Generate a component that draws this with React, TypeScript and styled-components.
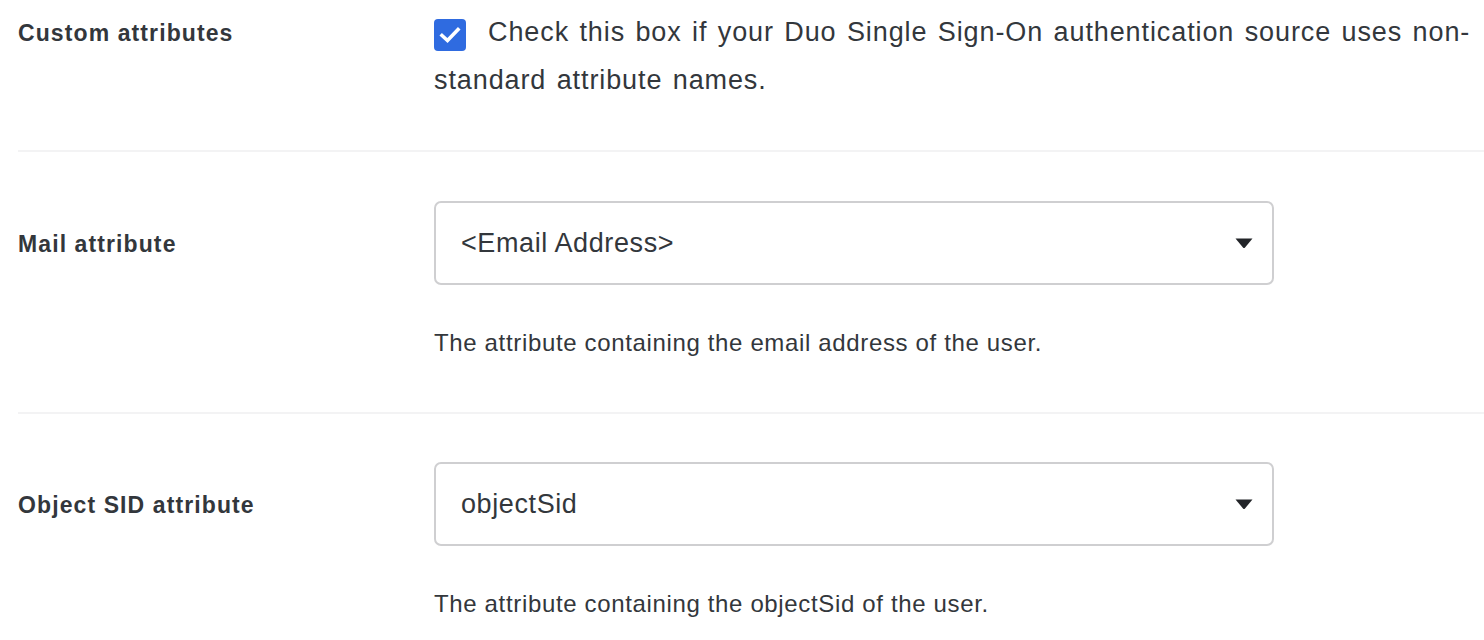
import React from "react";
import styled, { createGlobalStyle } from "styled-components";

const Global = createGlobalStyle`
  html, body { margin: 0; padding: 0; background: #fff; }
  body { font-family: "Liberation Sans", Arial, sans-serif; color: #33373c; overflow: hidden; }
`;

const Page = styled.div`
  padding-left: 18px;
`;

const Row = styled.div<{ $pt: number; $pb: number; $last?: boolean }>`
  display: grid;
  grid-template-columns: 416px 1fr;
  align-items: start;
  padding-top: ${(p) => p.$pt}px;
  padding-bottom: ${(p) => p.$pb}px;
  border-bottom: ${(p) => (p.$last ? "none" : "2px solid #f3f3f4")};
`;

const Label = styled.div<{ $mt?: number }>`
  font-weight: 700;
  font-size: 23px;
  letter-spacing: 1.1px;
  line-height: 32px;
  margin-top: ${(p) => p.$mt || 0}px;
`;

const CheckLine = styled.label`
  display: block;
  font-size: 27px;
  letter-spacing: 0.9px;
  word-spacing: 2px;
  line-height: 48px;
  padding-right: 4px;
`;

const Box = styled.span`
  display: inline-flex;
  align-items: center;
  justify-content: center;
  width: 32px;
  height: 32px;
  border-radius: 4px;
  background: #2f6be0;
  vertical-align: -3px;
  margin-right: 22px;
`;

const Field = styled.div`
  display: flex;
  flex-direction: column;
`;

const Select = styled.div`
  box-sizing: border-box;
  width: 840px;
  height: 84px;
  border: 2px solid #cfcfd1;
  border-radius: 7px;
  display: flex;
  align-items: center;
  justify-content: space-between;
  padding: 0 19px 0 25px;
  font-size: 27px;
  letter-spacing: 0.6px;
`;

const Help = styled.div`
  font-size: 24px;
  letter-spacing: 0.65px;
  line-height: 32px;
  margin-top: 42px;
`;

const Arrow = () => (
  <svg width="18" height="11" viewBox="0 0 18 11">
    <path d="M0.5 0.5 H17.5 L10 9.5 Q9 10.6 8 9.5 Z" fill="#222428" />
  </svg>
);

const Check = () => (
  <svg width="22" height="18" viewBox="0 0 22 18">
    <path d="M3 9.5 L8.5 14.5 L19 3.5" stroke="#fff" strokeWidth="3.6" fill="none" strokeLinecap="square" />
  </svg>
);

const SelectRow = ({ label, value, help, pt, pb, last }: { label: string; value: string; help: string; pt: number; pb: number; last?: boolean }) => (
  <Row $pt={pt} $pb={pb} $last={last}>
    <Label $mt={27}>{label}</Label>
    <Field>
      <Select>
        <span>{value}</span>
        <Arrow />
      </Select>
      <Help>{help}</Help>
    </Field>
  </Row>
);

export default function App() {
  return (
    <Page>
      <Global />
      <Row $pt={8} $pb={46}>
        <Label $mt={9}>Custom attributes</Label>
        <CheckLine>
          <Box>
            <Check />
          </Box>
          Check this box if your Duo Single Sign-On authentication source uses non-standard attribute names.
        </CheckLine>
      </Row>
      <SelectRow
        label="Mail attribute"
        value="<Email Address>"
        help="The attribute containing the email address of the user."
        pt={49}
        pb={53}
      />
      <SelectRow
        label="Object SID attribute"
        value="objectSid"
        help="The attribute containing the objectSid of the user."
        pt={48}
        pb={56}
        last
      />
    </Page>
  );
}
